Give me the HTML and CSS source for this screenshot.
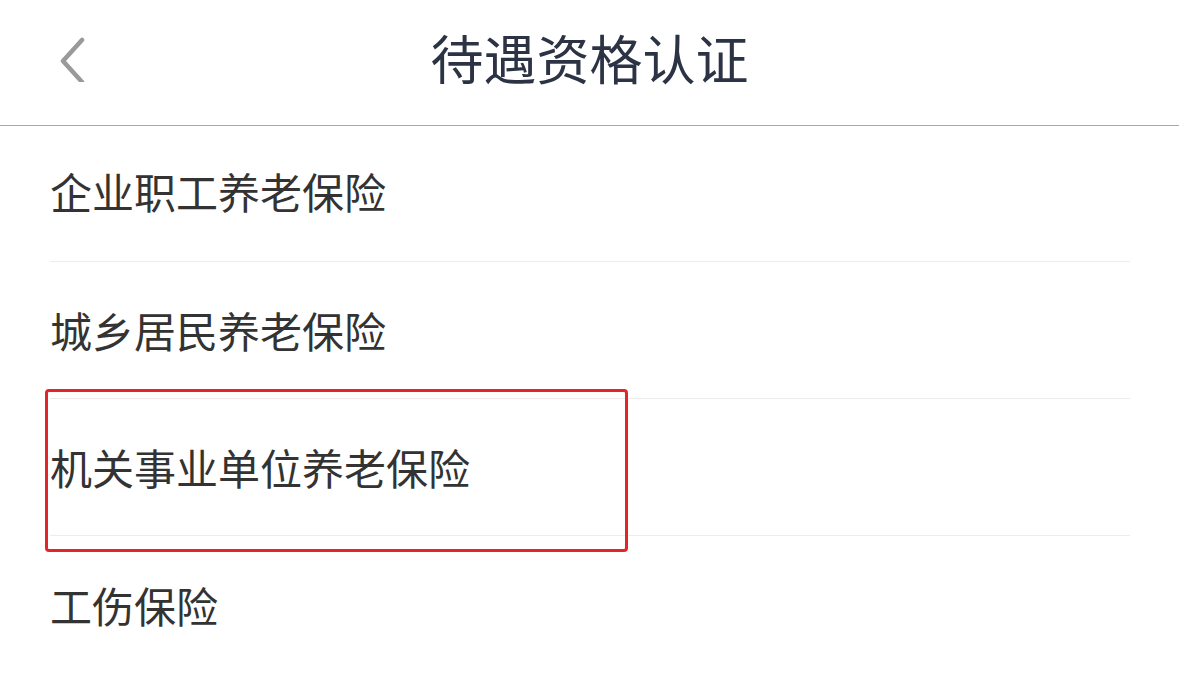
FILE: index.html
```html
<!DOCTYPE html>
<html lang="zh">
<head>
<meta charset="utf-8">
<link rel="stylesheet" href="styles.css">
</head>
<body>
<div class="page">
  <header class="header">
    <div class="back">
      <svg width="40" height="60" viewBox="0 0 40 60"><path d="M27 18 L8 39 L27 60" fill="none" stroke="#9a9a9a" stroke-width="4.5" stroke-linecap="round" stroke-linejoin="round"/></svg>
    </div>
    <h1 class="title">待遇资格认证</h1>
  </header>
  <ul class="list">
    <li class="item">企业职工养老保险</li>
    <li class="item">城乡居民养老保险</li>
    <li class="item">机关事业单位养老保险</li>
    <li class="item">工伤保险</li>
  </ul>
  <div class="mark"></div>
</div>
</body>
</html>
```
FILE: styles.css
```css
* { box-sizing: border-box; }
html, body { margin: 0; padding: 0; background: #fff; }
body { font-family: "Noto Sans CJK SC", "Noto Sans", sans-serif; overflow: hidden; }
.page { position: relative; width: 1179px; height: 673px; }
.header {
  height: 126px;
  border-bottom: 1px solid #a8a8a8;
  display: flex;
  align-items: center;
  justify-content: center;
  position: relative;
}
.back { position: absolute; left: 55px; top: 22px; }
.title {
  margin: 0;
  font-size: 53px;
  font-weight: 400;
  color: #2b3344;
  letter-spacing: 0;
  line-height: 1;
  margin-top: -10px;
}
.list { list-style: none; margin: 0; padding: 0; }
.item {
  margin: 0 49px 0 50px;
  height: 137px;
  border-bottom: 1px solid #ececec;
  display: flex;
  align-items: center;
  font-size: 42px;
  color: #333;
  line-height: 1;
}
.item:first-child { height: 136px; padding-bottom: 5px; }
.item:last-child { border-bottom: none; }
.mark {
  position: absolute;
  left: 45px;
  top: 389px;
  width: 583px;
  height: 163px;
  border: 3px solid #e0262a;
  border-radius: 4px;
}
```
